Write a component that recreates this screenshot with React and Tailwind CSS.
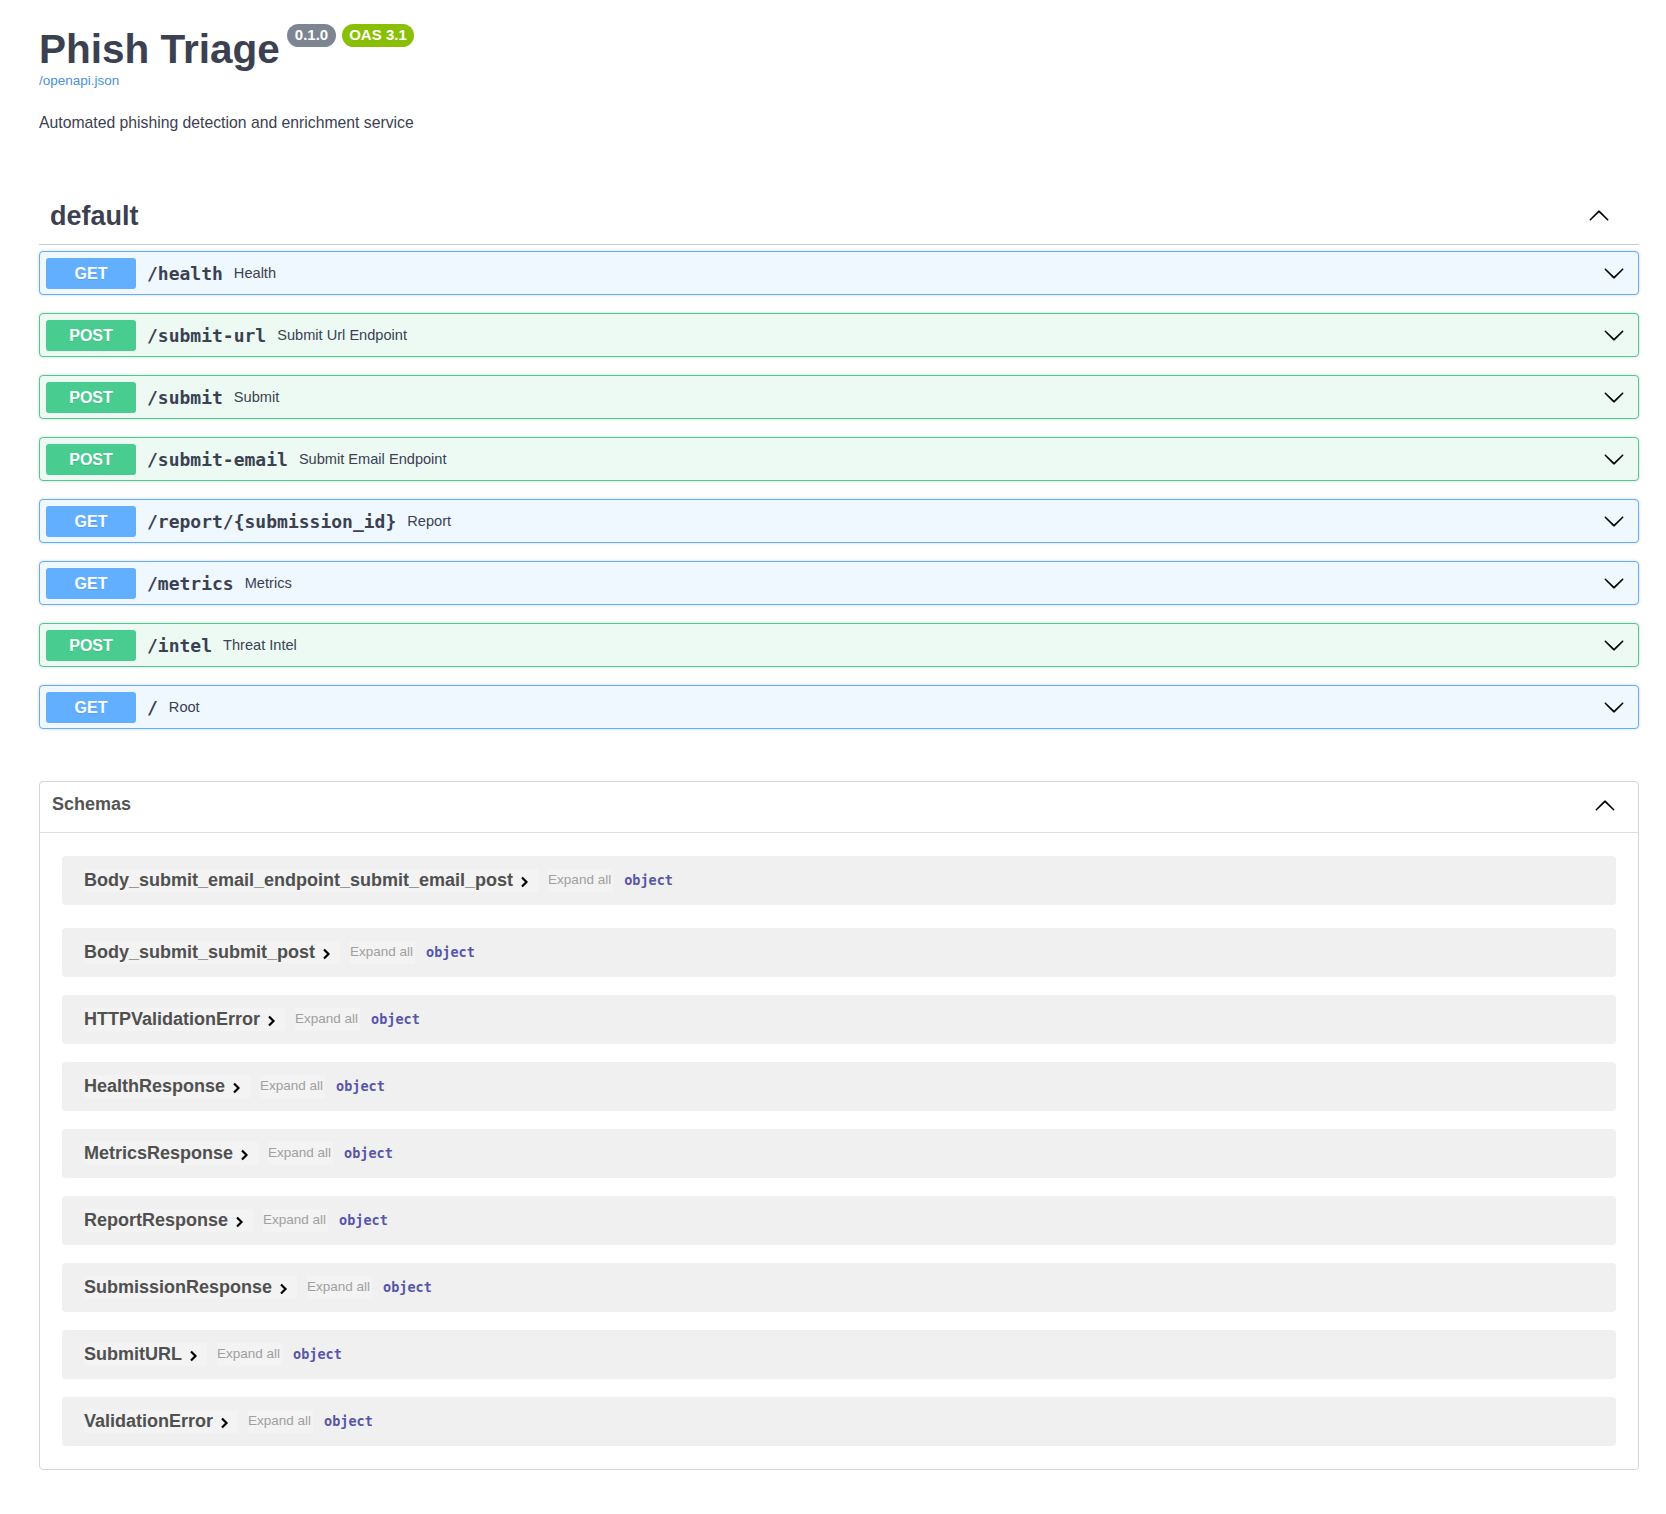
const sans = { fontFamily: '"Liberation Sans", Arial, sans-serif' };
const mono = { fontFamily: '"DejaVu Sans Mono", monospace' };

const endpoints = [
  { method: "GET", path: "/health", summary: "Health" },
  { method: "POST", path: "/submit-url", summary: "Submit Url Endpoint" },
  { method: "POST", path: "/submit", summary: "Submit" },
  { method: "POST", path: "/submit-email", summary: "Submit Email Endpoint" },
  { method: "GET", path: "/report/{submission_id}", summary: "Report" },
  { method: "GET", path: "/metrics", summary: "Metrics" },
  { method: "POST", path: "/intel", summary: "Threat Intel" },
  { method: "GET", path: "/", summary: "Root" },
];

const schemas = [
  "Body_submit_email_endpoint_submit_email_post",
  "Body_submit_submit_post",
  "HTTPValidationError",
  "HealthResponse",
  "MetricsResponse",
  "ReportResponse",
  "SubmissionResponse",
  "SubmitURL",
  "ValidationError",
];

function Arrow({ up = false, className = "" }) {
  return (
    <svg
      viewBox="0 0 20 20"
      className={`${className} ${up ? "rotate-180" : ""}`}
      fill="#000"
    >
      <path d="M17.418 6.109c.272-.268.709-.268.979 0s.271.701 0 .969l-7.908 7.83c-.27.268-.707.268-.979 0l-7.908-7.83c-.27-.268-.27-.701 0-.969.271-.268.709-.268.979 0L10 13.25l7.418-7.141z" />
    </svg>
  );
}

function OpBlock({ method, path, summary }) {
  const get = method === "GET";
  return (
    <div
      className={`mb-[18px] flex h-[44px] items-center rounded-[4px] border px-[6px] shadow-[0_0_3px_rgba(0,0,0,0.19)] ${
        get ? "border-[#61affe] bg-[#eff7ff]" : "border-[#49cc90] bg-[#edfaf4]"
      }`}
    >
      <span
        className={`flex h-[31px] w-[90px] items-center justify-center rounded-[3px] pt-[1px] text-[16px] font-bold text-white [text-shadow:0_1px_0_rgba(0,0,0,0.1)] ${
          get ? "bg-[#61affe]" : "bg-[#49cc90]"
        }`}
      >
        {method}
      </span>
      <span className="px-[11px] text-[18px] font-bold text-[#3b4151]" style={mono}>
        {path}
      </span>
      <span className="pt-[1px] text-[14.6px] text-[#3b4151]">{summary}</span>
      <Arrow className="ml-auto mr-[7px] h-[22px] w-[22px]" />
    </div>
  );
}

function SchemaRow({ name, first }) {
  return (
    <div
      className={`flex h-[49px] items-center rounded-[4px] bg-[#f0f0f0] pl-[22px] ${
        first ? "mt-[23px] mb-[23px]" : "mb-[18px]"
      }`}
    >
      <span className="flex h-[23px] items-center bg-[#f3f3f3] pr-[9px] text-[18px] font-bold text-[#505050]">
        {name}
        <svg
          viewBox="0 0 10 12"
          className="ml-[6px] mt-[2px] h-[12px] w-[10px]"
          fill="none"
          stroke="#000"
          strokeWidth="2.2"
        >
          <path d="M3 1.5 L7.5 6 L3 10.5" />
        </svg>
      </span>
      <span className="ml-[10px] flex h-[23px] items-center bg-[#f3f3f3] pr-[2px] text-[13.5px] text-[#a0a0a0]">
        Expand all
      </span>
      <span className="ml-[11px] text-[13.5px] font-bold text-[#55a]" style={mono}>
        object
      </span>
    </div>
  );
}

export default function App() {
  return (
    <div className="min-h-screen bg-white pb-[45px] pl-[39px] pr-[27px]" style={sans}>
      {/* Info */}
      <div className="flex items-start pt-[24px]">
        <h1 className="mt-[5px] text-[40.5px] font-bold leading-[40px] text-[#3b4151]">
          Phish Triage
        </h1>
        <span className="ml-[7px] flex h-[23px] items-center rounded-full bg-[#7d8492] px-[8px] text-[15px] font-bold text-white">
          0.1.0
        </span>
        <span className="ml-[6px] flex h-[23px] items-center rounded-full bg-[#89bf04] px-[7px] text-[15px] font-bold text-white">
          OAS 3.1
        </span>
      </div>
      <a className="mt-[3px] block text-[13.5px] leading-[18px] text-[#4990e2]">
        /openapi.json
      </a>
      <p className="mt-[22px] text-[15.75px] leading-[22px] text-[#3b4151]">
        Automated phishing detection and enrichment service
      </p>

      {/* Tag: default */}
      <div className="mt-[55px] flex items-center border-b border-[#c8cacf] pb-[12px] pl-[11px] pr-[29px] pt-[11px]">
        <h3 className="text-[27px] font-bold leading-[32px] text-[#3b4151]">default</h3>
        <Arrow up className="ml-auto h-[22px] w-[22px]" />
      </div>
      <div className="mt-[6px]">
        {endpoints.map((e) => (
          <OpBlock key={e.method + e.path} {...e} />
        ))}
      </div>

      {/* Schemas */}
      <section className="mt-[52px] rounded-[4px] border border-[#d6d6d6]">
        <div className="flex h-[51px] items-center border-b border-[#dedede] pb-[5px] pl-[12px] pr-[22px]">
          <h4 className="text-[18px] font-bold text-[#555]">Schemas</h4>
          <Arrow up className="ml-auto mt-[2px] h-[22px] w-[22px]" />
        </div>
        <div className="px-[22px] pb-[5px]">
          {schemas.map((s, i) => (
            <SchemaRow key={s} name={s} first={i === 0} />
          ))}
        </div>
      </section>
    </div>
  );
}
